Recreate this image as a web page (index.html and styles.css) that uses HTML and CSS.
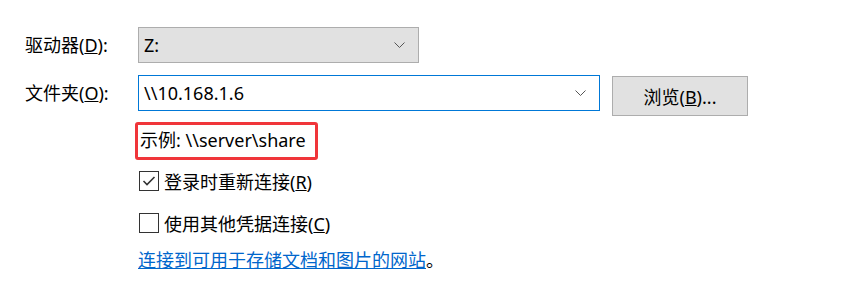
FILE: index.html
```html
<!DOCTYPE html>
<html lang="zh-CN">
<head>
    <meta charset="UTF-8">
    <title>映射网络驱动器</title>
    <link rel="stylesheet" href="styles.css">
</head>
<body>
    <div class="dialog">
        <div class="row">
            <label class="label">驱动器(<u>D</u>):</label>
            <div class="combo combo-drive">
                <span class="combo-value">Z:</span>
                <svg class="chevron" width="11" height="7" viewBox="0 0 11 7"><polyline points="0.5,0.5 5.5,5.5 10.5,0.5" fill="none" stroke="#555" stroke-width="1"/></svg>
            </div>
        </div>

        <div class="row row-folder">
            <label class="label">文件夹(<u>O</u>):</label>
            <div class="combo combo-folder">
                <span class="combo-value">\\10.168.1.6</span>
                <svg class="chevron" width="11" height="7" viewBox="0 0 11 7"><polyline points="0.5,0.5 5.5,5.5 10.5,0.5" fill="none" stroke="#555" stroke-width="1"/></svg>
            </div>
            <button class="btn">浏览(<u>B</u>)...</button>
        </div>

        <div class="indent">
            <div class="example">示例: \\server\share</div>

            <div class="check-row">
                <span class="checkbox">
                    <svg width="18" height="18" viewBox="0 0 18 18"><polyline points="3.5,9 7,12.5 14.5,5" fill="none" stroke="#333" stroke-width="1.6"/></svg>
                </span>
                <span>登录时重新连接(<u>R</u>)</span>
            </div>

            <div class="check-row">
                <span class="checkbox"></span>
                <span>使用其他凭据连接(<u>C</u>)</span>
            </div>

            <div class="link-row"><a href="#">连接到可用于存储文档和图片的网站</a>。</div>
        </div>
    </div>
</body>
</html>
```

FILE: styles.css
```css
:root {
    --ctl-bg: #e1e1e1;
    --ctl-border: #adadad;
    --focus: #0078d7;
    --link: #0066cc;
    --text: #000;
}

body {
    margin: 0;
    background: #fff;
    color: var(--text);
    font-family: "Noto Sans", "Noto Sans CJK SC", sans-serif;
    font-size: 18px;
}

.dialog {
    padding: 27px 0 0 25px;
}

.row {
    display: flex;
    align-items: flex-start;
}

.row-folder {
    margin-top: 12px;
}

.label {
    width: 113px;
    line-height: 36px;
    white-space: nowrap;
}

.combo {
    box-sizing: border-box;
    height: 36px;
    display: flex;
    align-items: center;
    justify-content: space-between;
    padding: 0 13px 0 5px;
    border: 1px solid var(--ctl-border);
}

.combo-drive {
    width: 281px;
    background: var(--ctl-bg);
}

.combo-folder {
    width: 462px;
    background: #fff;
    border-color: var(--focus);
}

.btn {
    box-sizing: border-box;
    margin-left: 12px;
    margin-top: 1px;
    width: 136px;
    height: 40px;
    background: var(--ctl-bg);
    border: 1px solid var(--ctl-border);
    font: inherit;
    color: var(--text);
    padding: 0;
}

.indent {
    margin-left: 110px;
}

.example {
    box-sizing: border-box;
    margin-top: 6px;
    width: 183px;
    height: 38px;
    line-height: 30px;
    padding-left: 2px;
    border: 3px solid #f0353a;
    border-radius: 3px;
    white-space: nowrap;
}

.check-row {
    display: flex;
    align-items: center;
    gap: 5px;
    margin-left: 4px;
    height: 20px;
    margin-top: 11px;
}

.check-row + .check-row {
    margin-top: 22px;
}

.checkbox {
    box-sizing: border-box;
    width: 20px;
    height: 20px;
    border: 1px solid #333;
    display: flex;
    align-items: center;
    justify-content: center;
    flex-shrink: 0;
}

.link-row {
    margin-left: 3px;
    margin-top: 13px;
}

.link-row a {
    color: var(--link);
    text-decoration: underline;
}
```
